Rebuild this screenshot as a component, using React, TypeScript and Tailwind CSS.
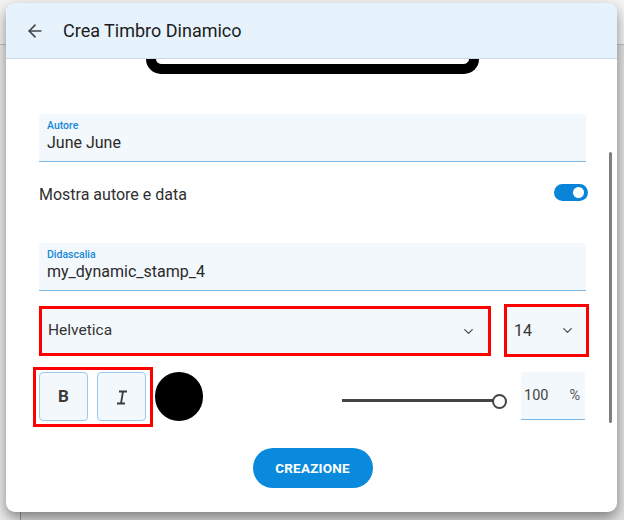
import { ArrowLeft, ChevronDown } from "lucide-react";

const font = { fontFamily: "Roboto, 'Noto Sans', sans-serif" };

function Field({ label, value }: { label: string; value: string }) {
  return (
    <div className="h-[48px] bg-[#f3f8fc] rounded-t-[4px] border-b border-[#7ab8e6] px-[8px] pt-[5px]">
      <div className="text-[10.5px] font-medium leading-[14px] text-[#1787d8]">{label}</div>
      <div className="text-[16px] leading-[20px] text-[#2a2a2a]">{value}</div>
    </div>
  );
}

export default function App() {
  return (
    <div className="relative w-[624px] h-[520px] overflow-hidden bg-[#ededed]" style={font}>
      {/* page behind the dialog */}
      <div className="h-[45px] border-b border-[#c4c4c4] bg-[#f4f4f4]" />
      <div className="ml-[20px] h-[475px] border-l border-[#9a9a9a] bg-[#e2e2e2]" />

      <div className="absolute left-[6px] top-[3px] w-[611px] h-[509px] bg-white rounded-[9px] overflow-hidden shadow-[0_6px_14px_rgba(0,0,0,0.45)]">
        <div className="h-[56px] bg-[#e6f3fd] border-b border-[#cad9e5] flex items-center">
          <ArrowLeft size={20} strokeWidth={2} className="ml-[19px] text-[#444]" />
          <span className="ml-[18px] text-[18px] text-[#1c1c1c]">Crea Timbro Dinamico</span>
        </div>

        <div className="relative pl-[33px] pr-[31px]">
          <div className="mx-auto w-[333px] h-[15px] border-[10px] border-t-0 border-black rounded-b-[16px]" />

          <div className="mt-[40px]">
            <Field label="Autore" value="June June" />
          </div>

          <div className="mt-[20px] h-[20px] flex items-center justify-between">
            <span className="mt-[6px] text-[16px] text-[#2f2f2f]">Mostra autore e data</span>
            <div className="mr-[-2px] w-[34px] h-[17px] rounded-full bg-[#0a84d8] flex items-center justify-end pr-[4px]">
              <div className="w-[11px] h-[11px] rounded-full bg-white" />
            </div>
          </div>

          <div className="mt-[41px]">
            <Field label="Didascalia" value="my_dynamic_stamp_4" />
          </div>

          <div className="mt-[13px] flex items-start">
            <div className="shrink-0 mt-[2px] w-[452px] h-[50px] border-[3px] border-[#ff0000] bg-[#f3f8fc] flex items-center justify-between pl-[6px] pr-[12px]">
              <span className="text-[15.5px] text-[#333]">Helvetica</span>
              <ChevronDown size={15} strokeWidth={2.2} className="text-[#555]" />
            </div>
            <div className="shrink-0 ml-[13px] w-[85px] h-[53px] border-[3px] border-[#ff0000] bg-[#f3f8fc] flex items-center justify-between pl-[7px] pr-[11px]">
              <span className="text-[16px] text-[#333]">14</span>
              <ChevronDown size={15} strokeWidth={2.2} className="text-[#555]" />
            </div>
          </div>

          <div className="mt-[10px] flex items-start">
            <div className="shrink-0 ml-[-6px] w-[120px] h-[60px] border-[3px] border-[#ff0000] flex gap-[9px] pl-[3px] pt-[2px]">
              <div className="w-[49px] h-[49px] rounded-[4px] border border-[#9cc9ee] bg-[#f3f8fc] flex items-center justify-center text-[17px] font-bold text-[#3a3a3a]">
                B
              </div>
              <div className="w-[49px] h-[49px] rounded-[4px] border border-[#9cc9ee] bg-[#f3f8fc] flex items-center justify-center">
                <svg width="14" height="16" viewBox="0 0 14 16">
                  <path d="M4 2.5h8M2 14.5h8M8 2.5L6 14.5" stroke="#3a3a3a" strokeWidth="1.8" fill="none" />
                </svg>
              </div>
            </div>
            <div className="shrink-0 ml-[2px] mt-[5px] w-[48px] h-[49px] rounded-full bg-black" />
            <div className="shrink-0 ml-[139px] mt-[9px] h-[49px] flex items-center">
              <div className="w-[151px] h-[3px] bg-[#444]" />
              <div className="ml-[-1px] w-[15px] h-[15px] rounded-full border-2 border-[#444] bg-white mt-[2px]" />
            </div>
            <div className="shrink-0 ml-[14px] mt-[5px] w-[64px] h-[48px] bg-[#f3f8fc] border-b border-[#7ab8e6] flex items-center justify-between pl-[3px] pr-[5px]">
              <span className="text-[14.5px] text-[#444]">100</span>
              <span className="text-[14.5px] text-[#555]">%</span>
            </div>
          </div>

          <div className="mt-[21px] flex justify-center">
            <button className="w-[120px] h-[40px] rounded-full bg-[#0a8adc] text-white text-[13.5px] font-bold tracking-[0.2px]">
              CREAZIONE
            </button>
          </div>
        </div>

        <div className="absolute left-[603px] top-[149px] w-[3px] h-[271px] rounded-full bg-[#7f7f7f]" />
      </div>
    </div>
  );
}
